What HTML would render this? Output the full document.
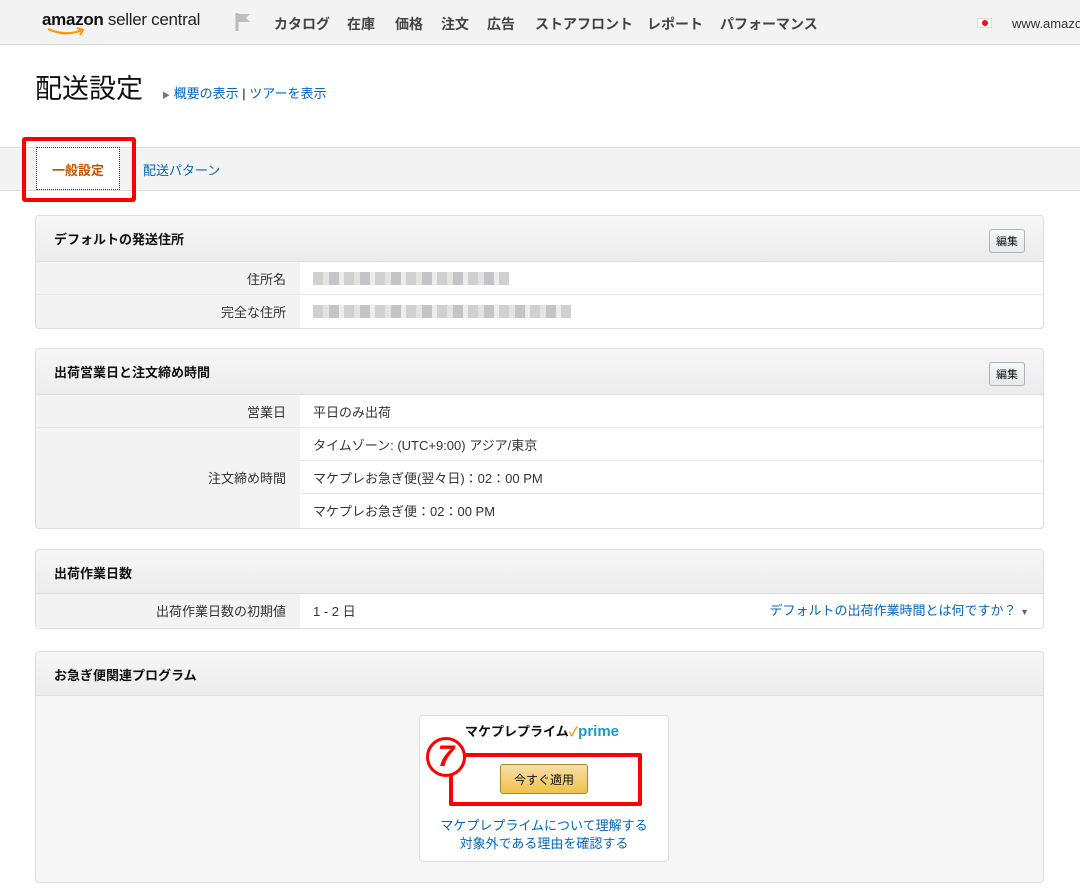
<!DOCTYPE html>
<html><head><meta charset="utf-8"><style>
*{box-sizing:border-box;margin:0;padding:0}
body{width:1080px;height:890px;overflow:hidden;background:#fff;font-family:"Liberation Sans","Noto Sans CJK JP",sans-serif;font-size:13px;color:#111;position:relative}
.a{position:absolute}
.hdr{left:0;top:0;width:1080px;height:45px;background:#f3f3f3;border-bottom:1px solid #d5d5d5}
.nav{top:14px;font-size:14px;font-weight:bold;color:#444}
a,.lk{color:#0066c0;text-decoration:none}
.box{left:35px;width:1009px;border:1px solid #ddd;border-radius:4px;background:#fff;overflow:hidden}
.bh{height:46px;background:linear-gradient(#f7f7f7,#ececec);border-bottom:1px solid #ddd;font-weight:bold;padding:13px 0 0 18px;position:relative;font-size:13px}
.row{height:33px;border-bottom:1px solid #e7e7e7;display:flex}
.row:last-child{border-bottom:none}
.lb{width:264px;background:#f3f3f3;text-align:right;padding:7px 14px 0 0;color:#333}
.vl{flex:1;padding:7px 0 0 13px;color:#333}
.ed{position:absolute;right:18px;top:13px;border:1px solid #adb1b8;border-radius:3px;background:linear-gradient(#f7f8fa,#e7e9ec);font-size:11px;padding:3px 6px;font-weight:normal}
.blur{display:inline-block;height:13px;background:repeating-linear-gradient(90deg,#d0d0d0 0 10px,#e3e3e3 10px 16px,#c4c4c8 16px 26px,#ececec 26px 31px);margin-top:3px}
</style></head><body>
<div class="a hdr"></div>
<div class="a" style="left:42px;top:10px;font-size:17px;letter-spacing:-0.3px"><b style="color:#111">amazon</b><span style="color:#222"> seller central</span></div>
<svg class="a" style="left:46px;top:27px" width="44" height="10"><path d="M2 2 Q20 10 36 3" stroke="#f90" stroke-width="2.2" fill="none"/><path d="M31 1 L37 3 L34 8" stroke="#f90" stroke-width="2" fill="none"/></svg>
<svg class="a" style="left:234px;top:12px" width="20" height="20"><path d="M3 1 V19" stroke="#bbb" stroke-width="3"/><path d="M4 2 H16 L12 6 L16 10 H4Z" fill="#c3bcbc"/></svg>
<div class="a nav" style="left:274px">カタログ</div>
<div class="a nav" style="left:347px">在庫</div>
<div class="a nav" style="left:395px">価格</div>
<div class="a nav" style="left:441px">注文</div>
<div class="a nav" style="left:487px">広告</div>
<div class="a nav" style="left:535px">ストアフロント</div>
<div class="a nav" style="left:647px">レポート</div>
<div class="a nav" style="left:720px">パフォーマンス</div>
<div class="a" style="left:977px;top:18px;width:15px;height:10px;background:#fff;border:1px solid #ddd"><div style="width:6px;height:6px;border-radius:50%;background:#e11;margin:1px auto"></div></div>
<div class="a" style="left:1012px;top:16px;color:#333;font-size:13px">www.amazon.co.jp</div>

<div class="a" style="left:35px;top:67px;font-size:27px;color:#111">配送設定</div>
<div class="a" style="left:162px;top:83px;font-size:13px"><span style="color:#777;font-size:8px">▶</span> <a>概要の表示</a> | <a>ツアーを表示</a></div>

<div class="a" style="left:0;top:147px;width:1080px;height:44px;background:#f3f3f3;border-top:1px solid #ddd;border-bottom:1px solid #ddd"></div>
<div class="a" style="left:36px;top:147px;width:84px;height:43px;background:#fff;border:1px dotted #333;color:#c45500;font-weight:bold;text-align:center;padding-top:12px">一般設定</div>
<div class="a lk" style="left:143px;top:160px">配送パターン</div>
<div class="a" style="left:22px;top:137px;width:114px;height:65px;border:4px solid #f00;border-radius:3px"></div>

<div class="a box" style="top:215px">
<div class="bh">デフォルトの発送住所<span class="ed">編集</span></div>
<div class="row"><div class="lb">住所名</div><div class="vl"><span class="blur" style="width:196px"></span></div></div>
<div class="row"><div class="lb">完全な住所</div><div class="vl"><span class="blur" style="width:258px"></span></div></div>
</div>

<div class="a box" style="top:348px">
<div class="bh">出荷営業日と注文締め時間<span class="ed">編集</span></div>
<div class="row"><div class="lb">営業日</div><div class="vl">平日のみ出荷</div></div>
<div style="display:flex;height:100px">
<div class="lb" style="padding-top:40px">注文締め時間</div>
<div style="flex:1">
<div class="row" style="border-bottom:1px solid #e7e7e7"><div class="vl">タイムゾーン: (UTC+9:00) アジア/東京</div></div>
<div class="row" style="border-bottom:1px solid #e7e7e7"><div class="vl">マケプレお急ぎ便(翌々日)：02：00 PM</div></div>
<div class="row"><div class="vl">マケプレお急ぎ便：02：00 PM</div></div>
</div></div>
</div>

<div class="a box" style="top:549px">
<div class="bh" style="height:44px;padding-top:13px">出荷作業日数</div>
<div class="row" style="height:34px"><div class="lb">出荷作業日数の初期値</div><div class="vl">1 - 2 日</div><div class="lk" style="padding:6px 14px 0 0">デフォルトの出荷作業時間とは何ですか？ <span style="color:#666;font-size:9px">▼</span></div></div>
</div>

<div class="a box" style="top:651px;height:232px;background:#f6f6f6">
<div class="bh" style="height:44px;padding-top:13px">お急ぎ便関連プログラム</div>
</div>
<div class="a" style="left:419px;top:715px;width:250px;height:147px;background:#fff;border:1px solid #ddd;border-radius:4px"></div>
<div class="a" style="left:465px;top:721px;font-weight:bold;font-size:13px">マケプレプライム<span style="color:#f90">✓</span><span style="color:#1a98c7;font-size:15px">prime</span></div>
<div class="a" style="left:500px;top:764px;width:88px;height:30px;border:1px solid #a88734;border-radius:3px;background:linear-gradient(#f7dfa5,#f0c14b);text-align:center;padding-top:6px;font-size:12px">今すぐ適用</div>
<div class="a" style="left:449px;top:753px;width:193px;height:53px;border:4px solid #f00;border-radius:2px"></div>
<div class="a" style="left:426px;top:737px;width:40px;height:40px;border:3px solid #f00;border-radius:50%;background:#fff;color:#f00;font-size:30px;font-weight:bold;font-style:italic;text-align:center;line-height:34px">7</div>
<div class="a lk" style="left:419px;top:817px;width:250px;text-align:center;line-height:18px">マケプレプライムについて理解する<br>対象外である理由を確認する</div>
</body></html>
